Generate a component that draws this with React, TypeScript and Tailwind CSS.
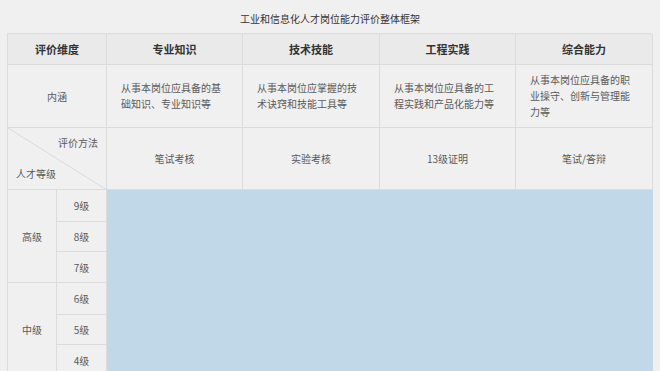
const font = "font-['Microsoft_YaHei','Noto_Sans_CJK_SC',sans-serif]";

const topics = [
  { name: "专业知识", desc: "从事本岗位应具备的基础知识、专业知识等", method: "笔试考核" },
  { name: "技术技能", desc: "从事本岗位应掌握的技术诀窍和技能工具等", method: "实验考核" },
  { name: "工程实践", desc: "从事本岗位应具备的工程实践和产品化能力等", method: "13级证明" },
  { name: "综合能力", desc: "从事本岗位应具备的职业操守、创新与管理能力等", method: "笔试/答辩" },
];

const cell = "border-r border-b border-[#dcdcdc] flex items-center justify-center";

export default function App() {
  return (
    <div className={`w-[660px] h-[371px] overflow-hidden bg-[#f0f0f0] ${font}`}>
      <div className="h-[33px] flex items-center justify-center pt-[4px] text-[10px] text-[#333]">
        工业和信息化人才岗位能力评价整体框架
      </div>
      <div className="ml-[7px] w-[645px] grid grid-cols-[49px_50px_136px_137px_136px_137px] grid-rows-[31px_63px_62px_32px_30px_31px_32px_30px_31px] border-l border-t border-[#dcdcdc] text-[10px] text-[#5a5a5a]">
        <div className={`${cell} col-span-2 bg-[#eaeaea] font-semibold text-[11px] text-[#333]`}>评价维度</div>
        {topics.map((t) => (
          <div key={t.name} className={`${cell} bg-[#eaeaea] font-semibold text-[11px] text-[#333]`}>
            {t.name}
          </div>
        ))}

        <div className={`${cell} col-span-2`}>内涵</div>
        {topics.map((t) => (
          <div key={t.desc} className={`${cell} justify-start px-[14px] leading-[16px]`}>
            <p>{t.desc}</p>
          </div>
        ))}

        <div className={`${cell} col-span-2 relative block`}>
          <svg className="absolute inset-0" width="99" height="62">
            <line x1="0" y1="0" x2="99" y2="62" stroke="#dadada" strokeWidth="1" />
          </svg>
          <span className="absolute right-[8px] top-[7px]">评价方法</span>
          <span className="absolute left-[8px] bottom-[8px]">人才等级</span>
        </div>
        {topics.map((t) => (
          <div key={t.method} className={cell}>
            {t.method}
          </div>
        ))}

        <div className={`${cell} row-span-3`}>高级</div>
        <div className={cell}>9级</div>
        <div className="col-span-4 row-span-6 bg-[#c0d8e7]" />
        <div className={cell}>8级</div>
        <div className={cell}>7级</div>
        <div className={`${cell} row-span-3`}>中级</div>
        <div className={cell}>6级</div>
        <div className={cell}>5级</div>
        <div className={cell}>4级</div>
      </div>
    </div>
  );
}
